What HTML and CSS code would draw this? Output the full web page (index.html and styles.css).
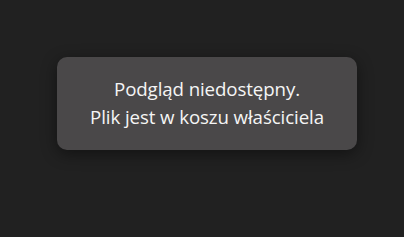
FILE: index.html
```html
<!DOCTYPE html>
<html lang="pl">
<head>
    <meta charset="UTF-8">
    <title>Podgląd niedostępny</title>
    <link rel="stylesheet" href="styles.css">
</head>
<body>
    <div class="viewer">
        <div class="notice">
            <p>Podgląd niedostępny.</p>
            <p>Plik jest w koszu właściciela</p>
        </div>
    </div>
</body>
</html>
```

FILE: styles.css
```css
* { box-sizing: border-box; margin: 0; padding: 0; }
body { background: #212121; font-family: 'Open Sans', Roboto, Arial, sans-serif; color: #fff; height: 100vh; overflow: hidden; }
.viewer { padding: 57px 0 0 57px; }
.notice { width: 300px; height: 93px; background: #4a4849; border-radius: 10px; box-shadow: 0 4px 16px rgba(0,0,0,0.45); display: flex; flex-direction: column; justify-content: center; align-items: center; padding-bottom: 2px; }
.notice p { font-size: 18.7px; line-height: 28px; color: #f5f5f5; font-weight: 500; letter-spacing: -0.1px; }
```
